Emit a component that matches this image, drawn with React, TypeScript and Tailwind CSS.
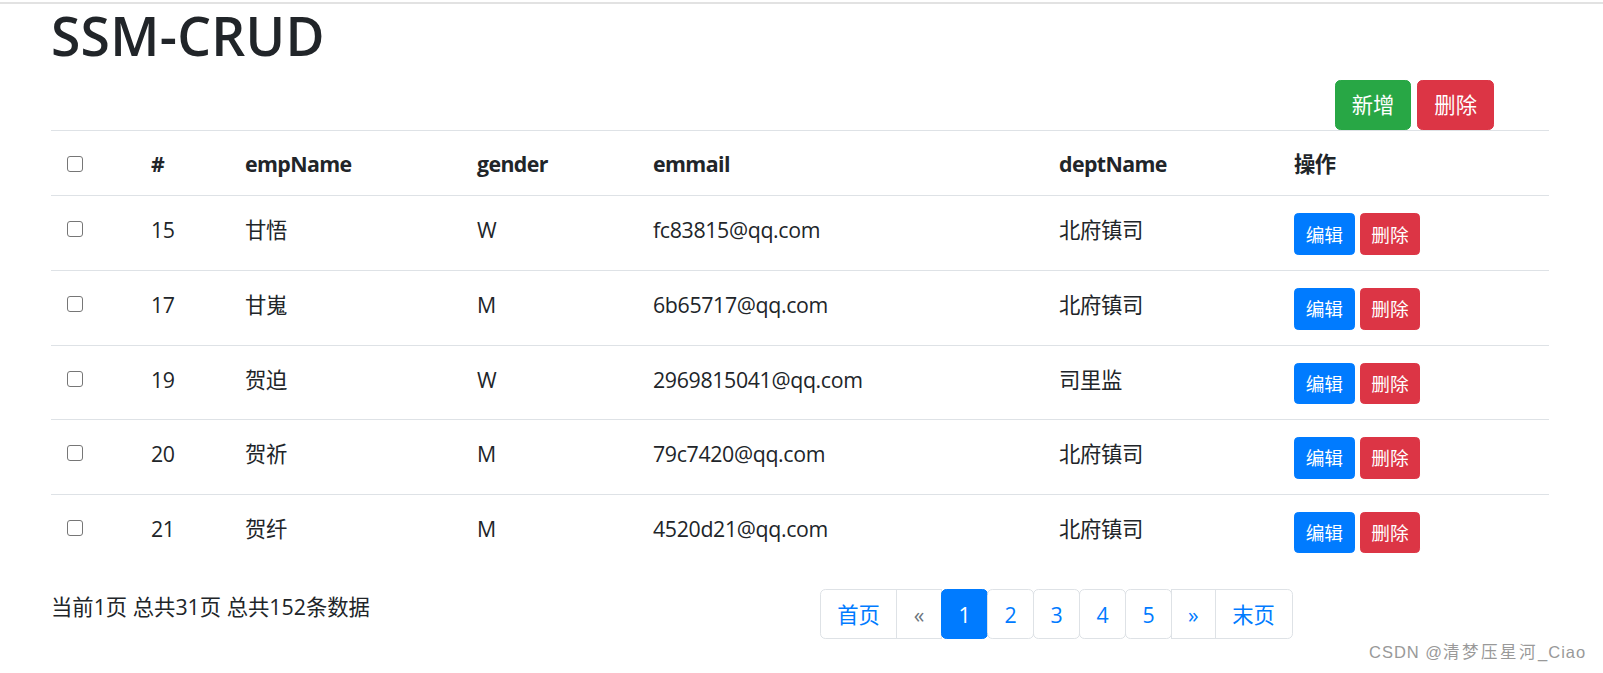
import React from "react";

const rows = [
  { id: 15, name: "甘悟", gender: "W", email: "fc83815@qq.com", dept: "北府镇司" },
  { id: 17, name: "甘嵬", gender: "M", email: "6b65717@qq.com", dept: "北府镇司" },
  { id: 19, name: "贺迫", gender: "W", email: "2969815041@qq.com", dept: "司里监" },
  { id: 20, name: "贺祈", gender: "M", email: "79c7420@qq.com", dept: "北府镇司" },
  { id: 21, name: "贺纤", gender: "M", email: "4520d21@qq.com", dept: "北府镇司" },
];

function Checkbox() {
  return (
    <div className="flex h-[32px] items-center">
      <span className="block h-[16px] w-[16px] rounded-[3px] border-[1.5px] border-[#767676] bg-white" />
    </div>
  );
}

export default function App() {
  const th = "border-t border-[#dee2e6] px-[16px] pt-[17px] pb-[15px] text-left align-bottom leading-[32px] font-bold tracking-[-0.6px]";
  const td = "border-t border-[#dee2e6] px-[16px] pt-[18px] pb-[14px] text-left align-top leading-[32px] font-normal tracking-[-0.35px]";
  const tdBtn = "border-t border-[#dee2e6] px-[16px] pt-[17px] pb-[15px] text-left align-top leading-[32px] font-normal";
  const pg = "px-[16px] pt-[12.5px] pb-[9.5px] leading-[26.67px] text-center";
  return (
    <div className="relative min-h-[673px] bg-white font-['Open_Sans','Noto_Sans_CJK_SC',sans-serif] text-[21.33px] text-[#212529]">
      <div className="pt-[2px]">
        <div className="h-[2px] bg-[#e2e2e2]" />
      </div>
      <div className="ml-[51px] w-[1498px]">
        <h1 className="mb-[11.67px] text-[53.33px] font-semibold leading-[64px] tracking-[0.3px]">SSM-CRUD</h1>
        <div className="flex justify-end gap-[6px] pr-[55px]">
          <button className="h-[50.67px] rounded-[5.33px] border border-[#28a745] bg-[#28a745] px-[16px] pt-[1px] leading-[32px] text-white">
            新增
          </button>
          <button className="h-[50.67px] rounded-[5.33px] border border-[#dc3545] bg-[#dc3545] px-[16px] pt-[1px] leading-[32px] text-white">
            删除
          </button>
        </div>
        <table className="w-full table-fixed border-collapse">
          <colgroup>
            <col className="w-[84px]" />
            <col className="w-[94px]" />
            <col className="w-[232px]" />
            <col className="w-[176px]" />
            <col className="w-[406px]" />
            <col className="w-[235px]" />
            <col className="w-[271px]" />
          </colgroup>
          <thead>
            <tr>
              <th className={th}>
                <Checkbox />
              </th>
              <th className={th}>#</th>
              <th className={th}>empName</th>
              <th className={th}>gender</th>
              <th className={th}>emmail</th>
              <th className={th}>deptName</th>
              <th className={th}>操作</th>
            </tr>
          </thead>
          <tbody>
            {rows.map((r) => (
              <tr key={r.id}>
                <td className={tdBtn}>
                  <Checkbox />
                </td>
                <td className={td}>{r.id}</td>
                <td className={td}>{r.name}</td>
                <td className={td}>{r.gender}</td>
                <td className={td}>{r.email}</td>
                <td className={td}>{r.dept}</td>
                <td className={tdBtn}>
                  <div className="flex gap-[5px]">
                    <button className="h-[41.6px] rounded-[4.27px] border border-[#007bff] bg-[#007bff] px-[10.67px] pt-[1px] text-[18.67px] leading-[28px] text-white">
                      编辑
                    </button>
                    <button className="h-[41.6px] rounded-[4.27px] border border-[#dc3545] bg-[#dc3545] px-[10.67px] pt-[1px] text-[18.67px] leading-[28px] text-white">
                      删除
                    </button>
                  </div>
                </td>
              </tr>
            ))}
          </tbody>
        </table>
        <div className="mt-[20.33px] flex">
          <div className="w-[769px] pt-[2px] leading-[32px]">当前1页 总共31页 总共152条数据</div>
          <ul className="flex">
            <li className={`w-[77px] rounded-l-[5.33px] border border-[#dee2e6] text-[#007bff] ${pg}`}>首页</li>
            <li className={`-ml-px w-[46px] border border-[#dee2e6] text-[#6c757d] ${pg}`}>«</li>
            <li className={`-ml-px w-[47px] rounded-[5.33px] border border-[#007bff] bg-[#007bff] text-white ${pg}`}>1</li>
            {[2, 3, 4, 5].map((n) => (
              <li
                key={n}
                className={`-ml-px w-[47px] rounded-[5.33px] border border-[#dee2e6] text-[#007bff] ${pg}`}
              >
                {n}
              </li>
            ))}
            <li className={`-ml-px w-[44.5px] border border-[#dee2e6] text-[#007bff] ${pg}`}>»</li>
            <li className={`-ml-px w-[78px] rounded-r-[5.33px] border border-[#dee2e6] text-[#007bff] ${pg}`}>末页</li>
          </ul>
        </div>
      </div>
      <div className="absolute left-[1369px] top-[641px] whitespace-nowrap font-['Liberation_Sans','Noto_Sans_CJK_SC',sans-serif] text-[16.5px] leading-[22px] tracking-[1px] text-[#999999]">
        CSDN @<span className="tracking-[2.5px]">清梦压星河</span>_Ciao
      </div>
    </div>
  );
}
